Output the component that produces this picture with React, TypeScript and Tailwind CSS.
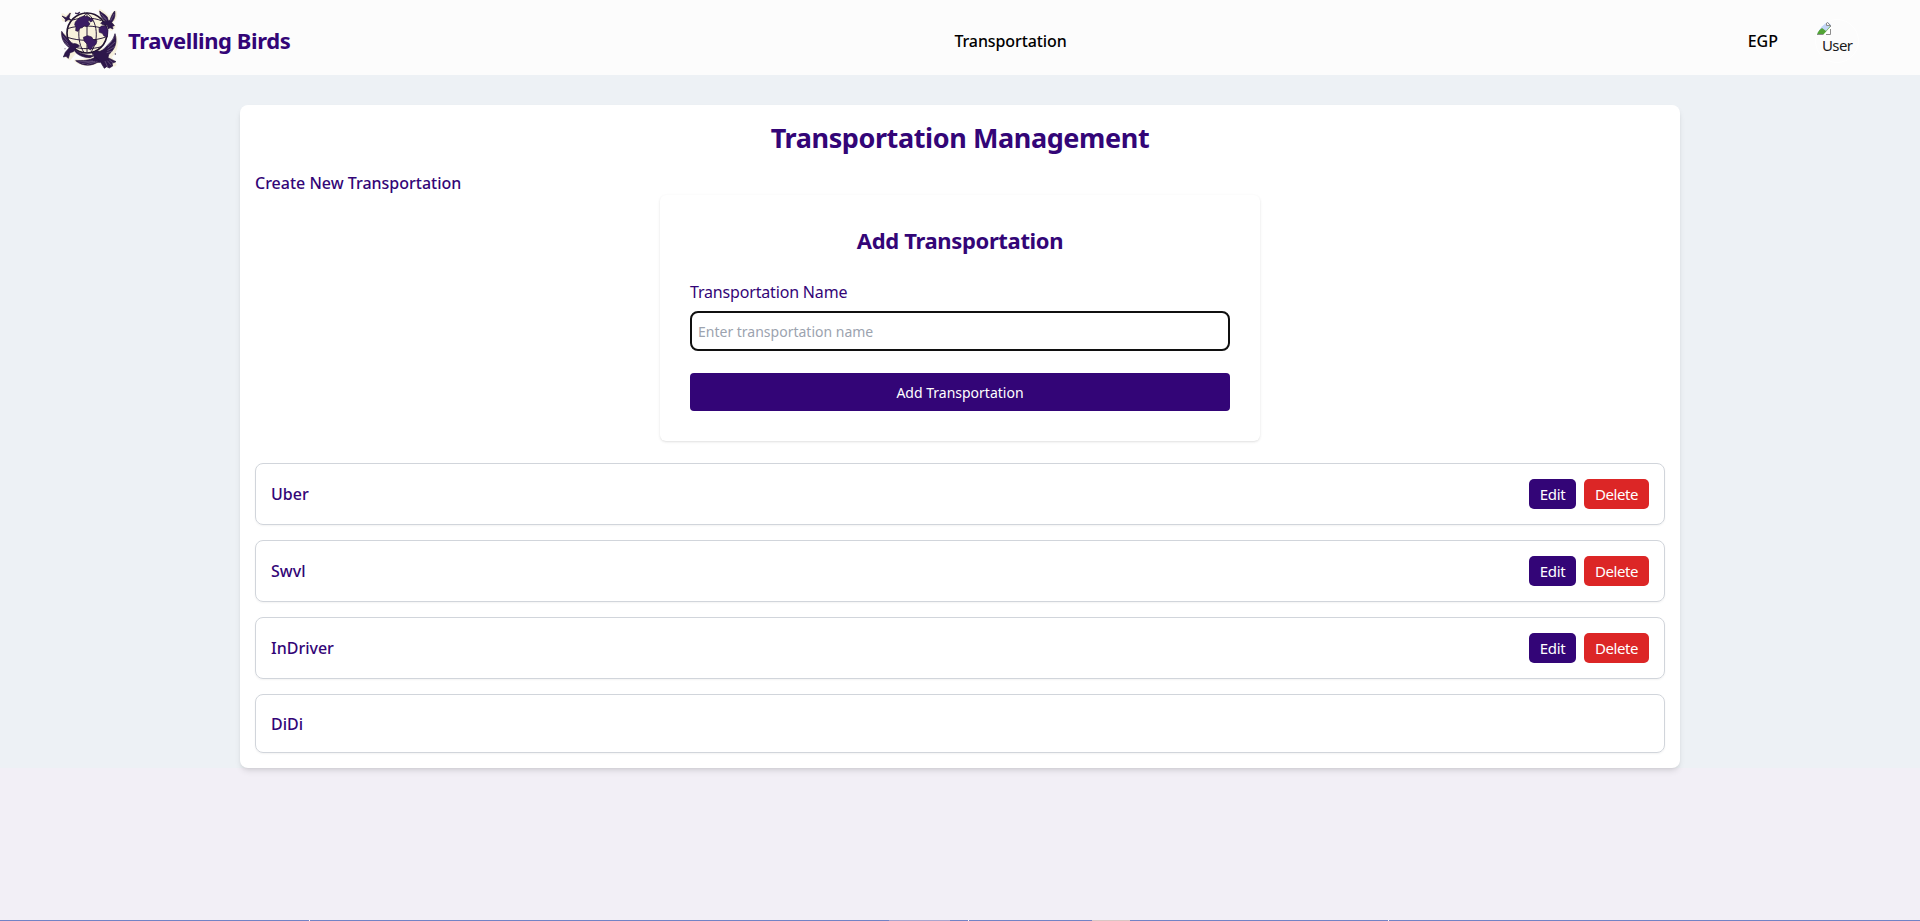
const items = [
  { name: 'Uber', editable: true },
  { name: 'Swvl', editable: true },
  { name: 'InDriver', editable: true },
  { name: 'DiDi', editable: false },
];

function Logo() {
  return (
    <svg viewBox="30 27 180 189" className="h-[63px] w-[60px] shrink-0" fill="none">
      <g stroke="#f6f0dc" strokeWidth="9" strokeLinejoin="round" fill="#f6f0dc">
        <path d="M35 96c4 26 20 40 36 46l-22 26 10 8 22-26c12 18 34 20 48 18-14 10-34 16-52 14 20 16 56 14 76-4l20 20 22-4-16-24c18-12 24-36 18-58-6 14-14 30-28 38" />
        <path d="M150 32c2 16 8 28 20 32l-8 10 22 14 8-8-8-14c10-6 14-18 12-30-8 4-14 12-18 20-8-8-16-18-28-24Z" />
        <path d="M38 44l10 8 12-12-4 14 6 8-22-2Z" />
      </g>
      <circle cx="111" cy="99" r="60" fill="#f8f2dc" stroke="#21132f" strokeWidth="5" />
      <g stroke="#2a1b3c" strokeWidth="3">
        <path d="M111 39c-28 20-34 84-8 120M111 39c32 22 38 84 10 120M111 39v120M52 86c36-12 82-10 118 2M52 112c36 12 82 12 118-2M68 60c26-8 62-8 86 2M68 140c26 8 60 8 86 0" />
      </g>
      <g fill="#3a1c63" stroke="#24123d" strokeWidth="2" strokeLinejoin="round">
        <path d="M76 66l12-13 14-5 16 3 2 8-6 5 6 8-9 8-8-3-6 6-8 2-5 9-7-2 1-11-4-7Z" />
        <path d="M117 57l9-2 2 8-7 3Z" />
        <path d="M147 86l7-8 14-1 6 14-2 20-10-3-5-8-9-3Z" />
        <path d="M100 112l13-5 12 4 4 7 12 4-3 11-9 6-7 11-8-5-2-12-9-9Z" />
      </g>
      <g fill="#2d174b" stroke="#24123d" strokeWidth="2" strokeLinejoin="round">
        <path d="M35 94c5 9 11 13 16 19 7 8 10 14 19 18 8-1 14 2 19 7l-12 6-7 11-10 3-5 17-7-6-8 2 6-14 12-14c-14-10-25-24-23-49Z" />
        <path d="M74 147c12 14 36 20 58 20l-12 6c-20 0-38-8-46-20Z" />
        <path d="M132 156l6-4 12 2c11-4 18-14 26-22 8-8 14-14 19-31 7 22 3 44-19 63l-2 9 24 12-12 5 2 8-10 6-8-4-7 5-11-18c-14 2-20-6-20-22l-6-3Z" />
        <path d="M77 182c22 0 40 0 60-10l12 10c-22 18-50 18-72 0Z" />
        <path d="M149 33c7 7 18 10 23 19l3 10 5-1c3-9 5-17 14-28 3 14-1 26-9 34l8 10-6 2 2 8-9-4-5 4-4-12-12-1-7-4 7-6 8 0c-10-7-17-17-18-31Z" />
        <path d="M36 48l12 5 13-14-4 15 6 6-9-1-8 6 0-7Z" />
        <path d="M75 39l7 1 8-4-4 5-5 1Z" />
      </g>
      <g stroke="#a596b2" strokeWidth="1.200">
        <path d="M38 107l15 18M39 119l16 14M45 130l14 9M192 113l-19 25M195 126l-22 19M194 140l-22 12M188 153l-18 5M85 186l44-3M95 191l40-7M110 194l32-9M153 42l16 15M157 51l14 10M192 42l-10 20" />
        <path d="M165 183l8 18M172 182l12 14M178 180l12 9" />
      </g>
      <g fill="#3a2b4e">
        <circle cx="196" cy="162" r="2" />
        <circle cx="45" cy="146" r="1.5" />
        <circle cx="104" cy="37" r="1.5" />
      </g>
    </svg>
  );
}

function Avatar() {
  return (
    <div className="relative h-[44px] w-[44px] shrink-0 overflow-hidden rounded-full border border-white">
      <svg viewBox="0 0 16 16" className="absolute top-0 left-0 h-4 w-4">
        <path d="M1 1h10l4 4v10H1Z" fill="#c3d5f5" />
        <path d="M1 15V12l5-4 4 3 5-6v10Z" fill="#52a435" />
        <path d="M7 15l8-9v9Z" fill="#ffffff" />
        <path d="M1 14.5h6M10 14.5h4.500V9M1 1.500h9.500l4 4V7" fill="none" stroke="#8d8d8d" />
        <path d="M10.500 1.500v4h4Z" fill="#f4f4f4" stroke="#8d8d8d" />
      </svg>
      <span className="absolute top-[13px] left-[6px] text-[15px] leading-[24px] tracking-[-0.6px] text-[#1a1a1a]">User</span>
    </div>
  );
}

export default function App() {
  return (
    <div className="flex h-[921px] flex-col overflow-hidden bg-[#f2eff6] font-['Noto_Sans','Open_Sans',sans-serif] text-[#330577]">
      <header className="grid h-[75px] shrink-0 grid-cols-[1fr_auto_1fr] items-center bg-[#fcfcfc] pt-[6px] pr-[61px] pl-[60px]">
        <div className="flex items-center gap-2">
          <Logo />
          <span className="pb-[2px] text-[22px] leading-[30px] font-bold tracking-[-0.42px]">Travelling Birds</span>
        </div>
        <nav className="pl-[102px] text-[16px] leading-[24px] font-medium tracking-[-0.1px] text-black">Transportation</nav>
        <div className="flex items-center justify-end gap-[37px]">
          <span className="text-[16px] leading-[24px] font-medium text-black">EGP</span>
          <Avatar />
        </div>
      </header>

      <div className="h-[693px] shrink-0 bg-[#edf1f5] pt-[30px]">
        <main className="mx-auto flex h-[663px] w-[1440px] flex-col rounded-lg bg-white p-[15px] shadow-md">
          <h1 className="text-center text-[27px] leading-[35px] font-bold tracking-[-0.4px]">Transportation Management</h1>
          <h2 className="mt-4 text-[16px] leading-[24px] font-medium">Create New Transportation</h2>

          <form className="mx-auto flex w-[600px] flex-col rounded-md bg-white p-[30px] shadow-sm">
            <h3 className="text-center text-[22px] leading-[30px] font-bold tracking-[-0.35px]">Add Transportation</h3>
            <label className="mt-[25px] text-[16px] leading-[24px] tracking-[-0.17px]">Transportation Name</label>
            <input
              type="text"
              placeholder="Enter transportation name"
              className="mt-[7px] h-10 rounded-lg border-2 border-[#101010] bg-white px-[6px] text-[14px] outline-none placeholder:text-[#9ca3af]"
            />
            <button type="button" className="mt-[22px] h-[38px] rounded bg-[#330577] text-[14px] text-white">
              Add Transportation
            </button>
          </form>

          <ul className="mt-[22px] flex flex-col gap-[15px]">
            {items.map((item) => (
              <li
                key={item.name}
                className={`flex items-center justify-between rounded-lg border border-[#d1d5db] px-[15px] shadow-xs ${item.editable ? 'h-[62px]' : 'h-[59px]'}`}
              >
                <span className="text-[16px] leading-[24px] font-medium">{item.name}</span>
                {item.editable && (
                  <div className="flex gap-2">
                    <button type="button" className="h-[30px] w-[47px] rounded-[5px] bg-[#330577] text-[15px] leading-[29px] tracking-[-0.35px] text-white">
                      Edit
                    </button>
                    <button type="button" className="h-[30px] w-[65px] rounded-[5px] bg-[#dc2626] text-[15px] leading-[29px] tracking-[-0.4px] text-white">
                      Delete
                    </button>
                  </div>
                )}
              </li>
            ))}
          </ul>
        </main>
      </div>

      <div className="mt-auto flex h-px shrink-0 bg-[#7283c6]">
        <div className="ml-[309px] h-px w-px bg-white" />
        <div className="ml-[579px] h-px w-[61px] bg-[#a9a5cf]" />
        <div className="ml-[18px] h-px w-px bg-white" />
        <div className="ml-[123px] h-px w-[38px] bg-[#d9c6c4]" />
        <div className="ml-[258px] h-px w-px bg-white" />
      </div>
    </div>
  );
}
